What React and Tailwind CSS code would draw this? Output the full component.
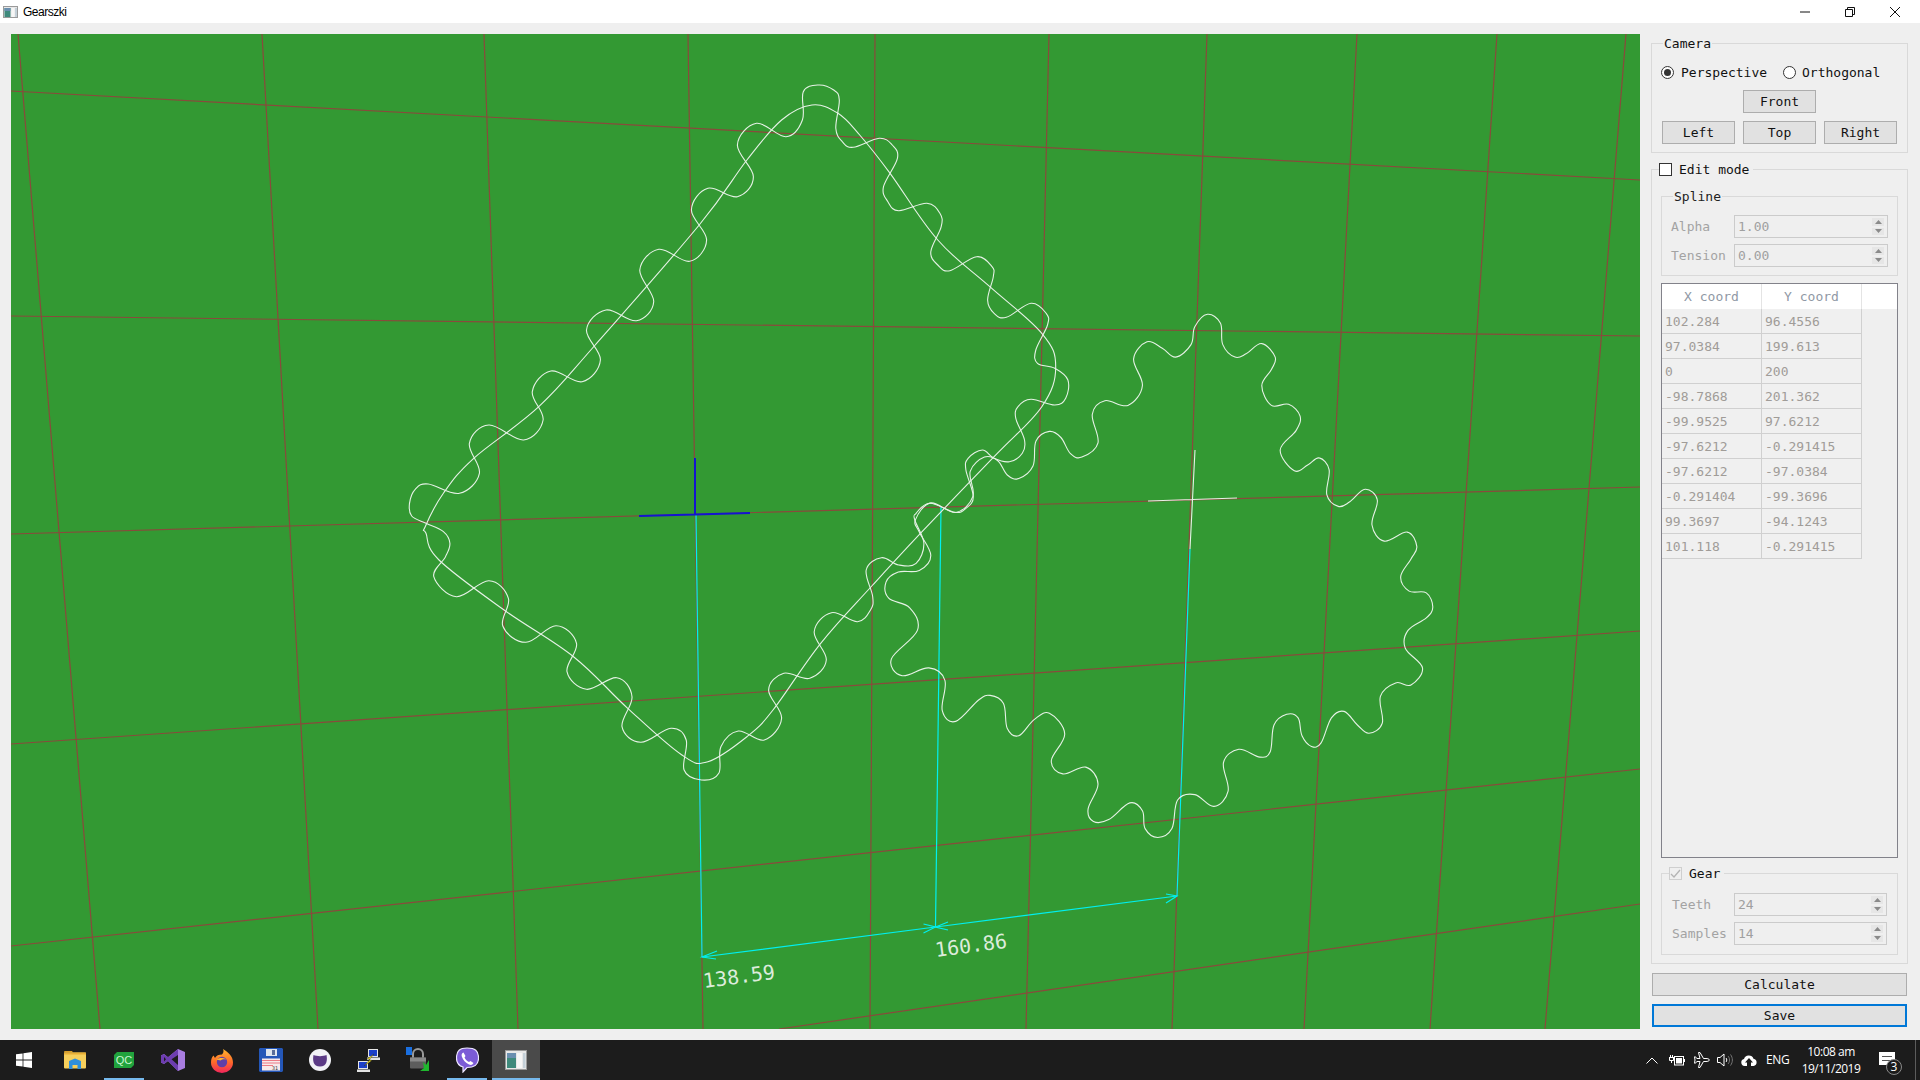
import React from "react";

const mono = { fontFamily: '"DejaVu Sans Mono", monospace' };

// traced from the reference, crop coords -> page coords
const fromA = (p) => [400 + (p[0] * 680) / 1568, 70 + p[1] / 3];
const fromB = (p) => [860 + (p[0] * 600) / 1568, 300 + (p[1] * 560) / 1568];

const gearOne = [
  [930,65],[965,45],[1000,60],[1013,90],[1005,175],[1020,215],[1045,232],[1105,205],[1135,225],[1147,265],[1115,350],[1125,395],[1150,422],[1215,400],[1245,430],[1248,470],[1224,545],[1240,585],[1268,602],[1330,560],[1365,590],[1368,620],[1355,690],[1370,730],[1398,742],[1455,700],[1490,730],[1493,765],[1466,840],[1470,880],[1510,895],[1540,930],[1535,985],[1510,1005],[1455,988],[1425,1010],[1420,1045],[1440,1110],[1435,1150],[1405,1175],[1370,1165],[1343,1140],[1310,1165],[1305,1200],[1322,1280],[1305,1315],[1280,1327],[1222,1300],[1190,1330],[1187,1350],
  [1208,1420],[1190,1480],[1150,1485],[1110,1463],[1075,1500],[1090,1580],[1085,1620],[1055,1655],[995,1628],[955,1685],[983,1770],[945,1825],[885,1810],[850,1860],[880,1945],[840,2010],[780,1983],[740,2030],[735,2110],[695,2130],[655,2100],[660,2010],[625,1975],[555,2017],[512,1970],[535,1880],[500,1823],[430,1858],[385,1805],[407,1720],[360,1667],[290,1717],[237,1668],[250,1585],[205,1532],[130,1580],[78,1520],[105,1460],[115,1420],[100,1385],[60,1360],[27,1338],
  [22,1300],[35,1258],[65,1242],[137,1270],[183,1210],[160,1120],[205,1065],[285,1110],[330,1050],[305,965],[348,903],[420,935],[462,870],[430,780],[475,720],[545,752],[585,695],[553,600],[597,538],[668,574],[707,510],[672,420],[710,355],[778,380],[815,320],[778,225],[822,160],[890,200],[928,150],
].map(fromA);

const splineOne = [
  [950,105],[1010,130],[1060,195],[1130,310],[1240,510],[1360,650],[1480,790],[1512,890],[1480,1010],[1370,1160],[1200,1390],[1090,1545],[970,1720],[860,1920],[800,2000],[710,2075],[650,2055],[525,1915],[400,1760],[240,1620],[90,1470],[60,1390],[58,1370],[100,1270],[170,1165],[320,1010],[450,825],[690,465],[800,270],[880,150],
].map(fromA);

const gearTwo = [
  [875,75],[908,40],[942,65],[948,125],[980,160],[1010,150],[1050,122],[1085,160],[1075,195],[1050,240],[1075,295],[1120,292],[1150,325],[1140,365],[1098,420],[1135,478],[1170,462],[1200,442],[1226,475],[1220,545],[1250,578],[1280,565],[1320,530],[1352,560],[1338,630],[1370,675],[1430,650],[1455,690],[1440,725],[1413,775],[1435,815],[1480,820],[1497,860],[1480,890],[1432,925],[1425,975],[1470,1030],[1440,1078],[1400,1072],[1360,1110],[1365,1185],[1330,1213],[1300,1190],[1265,1152],[1232,1170],[1205,1240],[1180,1250],[1155,1220],[1145,1170],[1115,1160],[1082,1190],[1072,1265],[1045,1280],[990,1258],[950,1295],[962,1375],[925,1418],[875,1385],[830,1400],[815,1480],[778,1505],[745,1480],[738,1430],[705,1408],[650,1455],[610,1460],[596,1425],[622,1355],[590,1308],[530,1327],[500,1290],[535,1215],[495,1157],[455,1175],[415,1220],[385,1200],[375,1130],[340,1107],[310,1120],[250,1180],[215,1150],[222,1065],[180,1030],[110,1052],[82,1005],[150,925],[130,862],[75,835],[68,790],[100,762],[155,757],[185,715],[155,650],[145,615],[185,568],[250,595],[295,550],[288,480],[325,440],[360,450],[385,490],[415,500],[452,465],[460,395],[495,368],[525,385],[550,430],[580,440],[622,400],[607,320],[640,282],[700,295],[738,240],[715,165],[750,117],[790,135],[825,160],[865,125],
].map(fromB);

// closed catmull-rom through the traced points
function smooth(pts) {
  const n = pts.length;
  let d = `M${pts[0][0].toFixed(1)} ${pts[0][1].toFixed(1)}`;
  for (let i = 0; i < n; i++) {
    const p0 = pts[(i - 1 + n) % n];
    const p1 = pts[i];
    const p2 = pts[(i + 1) % n];
    const p3 = pts[(i + 2) % n];
    const c1 = [p1[0] + (p2[0] - p0[0]) / 5.5, p1[1] + (p2[1] - p0[1]) / 5.5];
    const c2 = [p2[0] - (p3[0] - p1[0]) / 5.5, p2[1] - (p3[1] - p1[1]) / 5.5];
    d += `C${c1[0].toFixed(1)} ${c1[1].toFixed(1)} ${c2[0].toFixed(1)} ${c2[1].toFixed(1)} ${p2[0].toFixed(1)} ${p2[1].toFixed(1)}`;
  }
  return d + "Z";
}

const gridLines = [
  [11, 91, 1640, 180], [11, 316, 1640, 336], [11, 534, 1640, 487], [11, 744, 1640, 631], [11, 946, 1640, 769], [779, 1029, 1640, 904],
  [18, 34, 100, 1029], [262, 34, 318, 1029], [484, 34, 518, 1029], [688, 34, 703, 1029], [875, 34, 870, 1029],
  [1049, 34, 1026, 1029], [1207, 34, 1172, 1029], [1357, 34, 1304, 1029], [1497, 34, 1430, 1029], [1626, 34, 1545, 1029],
];

function Viewport() {
  return (
    <svg className="block w-full h-full" viewBox="11 34 1629 995">
      {gridLines.map((l, i) => (
        <line key={i} x1={l[0]} y1={l[1]} x2={l[2]} y2={l[3]} stroke="#8a4a3c" strokeWidth="1.2" />
      ))}

      <g stroke="#00f0f0" strokeWidth="1.2" fill="none">
        <path d="M696 515L702 957M941 507L935.5 927M1190 549L1177 896" />
        <path d="M702 957L935.5 927L1177 896" />
        <path d="M717 951L702 957L716 959" />
        <path d="M923.5 924L935.5 927L923.5 933M948 922L935.5 927L948 930" />
        <path d="M1166 894L1177 896L1166 903" />
      </g>

      <g stroke="#1414d0" strokeWidth="2" fill="none">
        <path d="M695 458L695 514M639 516L750 513" />
      </g>

      <g stroke="#e6f2e6" strokeWidth="1.1" fill="none">
        <path d={smooth(gearOne)} />
        <path d={smooth(splineOne)} />
        <path d={smooth(gearTwo)} />
        <path d="M1195 450L1190 549M1148 501L1237 498" />
      </g>

      <g fill="#dcecdc" fontSize="20" style={mono}>
        <text x="704" y="988" transform="rotate(-7.4 704 988)">138.59</text>
        <text x="936" y="957" transform="rotate(-7.4 936 957)">160.86</text>
      </g>
    </svg>
  );
}

function Group({ title, titleClass = "left-[11px]", className = "", children }) {
  return (
    <div className={`relative border border-[#d9d9d9] ${className}`}>
      {title && (
        <span className={`absolute -top-[8px] bg-[#efefef] px-[1px] leading-[16px] ${titleClass}`}>{title}</span>
      )}
      {children}
    </div>
  );
}

function Button({ label, className = "" }) {
  return (
    <div className={`flex items-center justify-center h-[23px] bg-[#e1e1e1] text-[#111] ${className}`}>
      {label}
    </div>
  );
}

function Radio({ checked }) {
  return (
    <span className="flex items-center justify-center w-[13px] h-[13px] rounded-full border border-[#333] bg-white">
      {checked && <span className="w-[7px] h-[7px] rounded-full bg-[#333]" />}
    </span>
  );
}

function Spin({ label, value, className = "" }) {
  return (
    <div className={`flex items-center ${className}`}>
      <span className="flex-1 text-[#a3a3a3]">{label}</span>
      <div className="flex items-center justify-between w-[154px] h-[23px] pl-[3px] pr-[2px] border border-[#cbcbcb] text-[#a0a0a0]">
        <span>{value}</span>
        <div className="flex flex-col w-[14px] h-[19px]">
          <span className="flex flex-1 items-center justify-center bg-[#e6e6e6] border border-[#efefef]">
            <svg width="7" height="4" viewBox="0 0 7 4"><path d="M3.5 0L7 4H0Z" fill="#8a8a8a" /></svg>
          </span>
          <span className="flex flex-1 items-center justify-center bg-[#e6e6e6] border border-[#efefef]">
            <svg width="7" height="4" viewBox="0 0 7 4"><path d="M3.5 4L7 0H0Z" fill="#8a8a8a" /></svg>
          </span>
        </div>
      </div>
    </div>
  );
}

const coords = [
  ["102.284", "96.4556"],
  ["97.0384", "199.613"],
  ["0", "200"],
  ["-98.7868", "201.362"],
  ["-99.9525", "97.6212"],
  ["-97.6212", "-0.291415"],
  ["-97.6212", "-97.0384"],
  ["-0.291404", "-99.3696"],
  ["99.3697", "-94.1243"],
  ["101.118", "-0.291415"],
];

function CoordTable() {
  return (
    <div className="h-[575px] mt-[7px] border border-[#82828a] text-[#a09c98]">
      <div className="flex h-[25px] bg-white text-[#8f98a5]">
        <div className="flex items-center justify-center w-[100px] border-r border-[#e4e4e4]">X coord</div>
        <div className="flex items-center justify-center w-[100px] border-r border-[#e4e4e4]">Y coord</div>
      </div>
      {coords.map((row) => (
        <div key={row[0] + row[1]} className="flex w-[200px] h-[25px]">
          <div className="flex items-center w-[100px] pl-[3px] bg-[#f0f0f0] border-r border-b border-[#d0d0d0]">{row[0]}</div>
          <div className="flex items-center w-[100px] pl-[3px] bg-[#f0f0f0] border-r border-b border-[#d0d0d0]">{row[1]}</div>
        </div>
      ))}
    </div>
  );
}

function SidePanel() {
  return (
    <div className="w-[280px] pt-[20px] pl-[11px] pr-[12px] text-[13px] leading-none" style={mono}>
      <Group title="Camera" className="h-[110px] px-[10px] text-[#111]">
        <div className="flex items-center h-[16px] mt-[20px] ml-[-1px]">
          <Radio checked />
          <span className="ml-[7px] w-[102px]">Perspective</span>
          <Radio />
          <span className="ml-[6px]">Orthogonal</span>
        </div>
        <div className="flex justify-center mt-[10px]">
          <Button label="Front" className="w-[73px] border border-[#adadad]" />
        </div>
        <div className="grid grid-cols-3 gap-[8px] w-[235px] mt-[8px]">
          <Button label="Left" className="border border-[#adadad]" />
          <Button label="Top" className="border border-[#adadad]" />
          <Button label="Right" className="border border-[#adadad]" />
        </div>
      </Group>

      <Group className="h-[795px] mt-[16px] px-[9px]">
        <div className="absolute -top-[7px] left-[7px] flex items-center gap-[7px] bg-[#efefef] pr-[4px] text-[#111]">
          <span className="w-[13px] h-[13px] border border-[#333] bg-white" />
          <span>Edit mode</span>
        </div>

        <Group title="Spline" className="h-[80px] mt-[26px] px-[9px] text-[#222]">
          <Spin label="Alpha" value="1.00" className="mt-[18px]" />
          <Spin label="Tension" value="0.00" className="mt-[6px]" />
        </Group>

        <CoordTable />

        <Group className="h-[82px] mt-[15px] pl-[10px] pr-[10px]">
          <div className="absolute -top-[7px] left-[7px] flex items-center gap-[7px] bg-[#efefef] pr-[4px] text-[#111]">
            <span className="flex items-center justify-center w-[13px] h-[13px] border border-[#cfcfcf]">
              <svg width="11" height="9" viewBox="0 0 11 9" fill="none"><path d="M1 5L4 8L10 1" stroke="#b4b4b4" strokeWidth="1.3" /></svg>
            </span>
            <span>Gear</span>
          </div>
          <Spin label="Teeth" value="24" className="mt-[19px] [&>div]:w-[153px]" />
          <Spin label="Samples" value="14" className="mt-[6px] [&>div]:w-[153px]" />
        </Group>
      </Group>

      <Button label="Calculate" className="w-[255px] mt-[9px] ml-[1px] border border-[#adadad]" />
      <Button label="Save" className="w-[255px] mt-[8px] ml-[1px] border-2 border-[#0078d7]" />
    </div>
  );
}

function AppIcon() {
  return (
    <svg width="15" height="12" viewBox="0 0 15 12">
      <rect x="0.5" y="0.5" width="14" height="11" fill="#e8e8e8" stroke="#9a9a9a" />
      <rect x="1.5" y="2" width="6" height="9" fill="#3f8a7c" />
      <rect x="1.5" y="2" width="6" height="3" fill="#6a8fb0" />
      <rect x="8.5" y="2" width="3" height="9" fill="#f6f6f6" />
      <rect x="12" y="2" width="2" height="9" fill="#c4d0d8" />
    </svg>
  );
}

function TitleBar() {
  return (
    <div className="flex items-center h-[23px] bg-white text-black">
      <div className="ml-[3px]"><AppIcon /></div>
      <span className="ml-[5px] text-[12px] tracking-[-0.5px]" style={{ fontFamily: '"Liberation Sans", sans-serif' }}>Gearszki</span>
      <div className="flex ml-auto pr-[3px]">
        <div className="flex items-center justify-center w-[45px] h-[21px]">
          <svg width="10" height="10" viewBox="0 0 10 10"><path d="M0 5H10" stroke="#111" /></svg>
        </div>
        <div className="flex items-center justify-center w-[45px] h-[21px]">
          <svg width="10" height="10" viewBox="0 0 10 10" fill="none" stroke="#111"><path d="M.5 2.5h7v7h-7zM2.5 2.5v-2h7v7h-2" /></svg>
        </div>
        <div className="flex items-center justify-center w-[45px] h-[21px]">
          <svg width="10" height="10" viewBox="0 0 10 10"><path d="M0 0L10 10M10 0L0 10" stroke="#111" /></svg>
        </div>
      </div>
    </div>
  );
}

const icons = {
  start: (
    <svg width="16" height="16" viewBox="0 0 16 16" fill="#fff">
      <path d="M0 2.3L6.6 1.4V7.6H0ZM7.4 1.3L16 0V7.6H7.4ZM0 8.4H6.6V14.6L0 13.7ZM7.4 8.4H16V16L7.4 14.7Z" />
    </svg>
  ),
  explorer: (
    <svg width="22" height="20" viewBox="0 0 22 20">
      <path d="M0 2a1 1 0 0 1 1-1h7l1 1.5H0Z" fill="#d99d29" />
      <rect x="0" y="2.5" width="22" height="16" rx="1" fill="#f6cf5c" />
      <rect x="0" y="2.5" width="22" height="2" fill="#e8ae34" />
      <path d="M5 19v-8l6-2.5 6 2.5v8h-3.5v-4h-5v4Z" fill="#2f8fdc" />
    </svg>
  ),
  qc: (
    <svg width="20" height="16" viewBox="0 0 20 16">
      <path d="M3 0H20V13L17 16H0V3Z" fill="#21a33d" />
      <text x="10" y="12" textAnchor="middle" fontSize="11" fill="#c9f5d0" style={{ fontFamily: '"Liberation Sans", sans-serif' }}>QC</text>
    </svg>
  ),
  vs: (
    <svg width="24" height="24" viewBox="0 0 24 24">
      <path d="M17 1L24 4V20L17 23L7 13L3 16L0 14.5V7.5L3 6L7 9.2Z" fill="#a87de0" />
      <path d="M17 1V23L7 13L3 16L0 14.5V7.5L3 6L7 9.2Z" fill="#6d3db0" />
      <path d="M17 7L10.5 11.2L17 17ZM3 9V13.5L5 11.2Z" fill="#1c1c1c" />
    </svg>
  ),
  firefox: (
    <svg width="24" height="25" viewBox="0 0 24 25">
      <defs>
        <linearGradient id="ff" x1="0" y1="0" x2="0" y2="1">
          <stop offset="0" stopColor="#ffb52e" />
          <stop offset="0.55" stopColor="#ff6a2a" />
          <stop offset="1" stopColor="#f0245c" />
        </linearGradient>
      </defs>
      <path d="M13 1C18 4 23 8 23 14.5A11 10.5 0 0 1 1 14.5C1 11 2 9 3.5 7.5L5 10C6 7.5 9 6.5 12 6.5C13.5 5 14 3 13 1Z" fill="url(#ff)" />
      <circle cx="12" cy="14" r="5.2" fill="#5f3fa8" />
      <path d="M6.5 11.5C9 9.5 14 9.5 16.5 11.5C14 10.8 12 11.2 10.5 12.5Z" fill="#ffb52e" />
    </svg>
  ),
  floppy: (
    <svg width="24" height="24" viewBox="0 0 24 24">
      <path d="M1 0H23L24 1V23L23 24H1L0 23V1Z" fill="#2457b8" />
      <rect x="7" y="1" width="11" height="7" fill="#dfe6ee" />
      <rect x="13" y="2" width="3" height="5" fill="#5a6e9a" />
      <rect x="3" y="10.5" width="18" height="12" fill="#f7e9ea" />
      <path d="M3 12.5H21M3 15H21M3 17.5H14" stroke="#ec7a86" strokeWidth="1.1" />
      <text x="19" y="22" textAnchor="end" fontSize="5" fill="#333" style={mono}>31</text>
    </svg>
  ),
  cat: (
    <svg width="22" height="24" viewBox="0 0 22 24">
      <circle cx="11" cy="12" r="11" fill="#f1f1f6" />
      <path d="M4.5 7C8 8.5 14 8.5 17.5 7C18.5 12 18 18.5 11 18.5C4 18.5 3.5 12 4.5 7Z" fill="#5b3a86" />
    </svg>
  ),
  putty: (
    <svg width="24" height="25" viewBox="0 0 24 25">
      <rect x="11" y="1" width="10" height="8" fill="#e6e6e6" />
      <rect x="12" y="2" width="8" height="6" fill="#1c3fc8" />
      <path d="M10 9.5H23V12H10Z" fill="#e2e2e2" />
      <rect x="1" y="13" width="10" height="8" fill="#e6e6e6" />
      <rect x="2" y="14" width="8" height="6" fill="#1c3fc8" />
      <path d="M0 21.5H13V24H0Z" fill="#e2e2e2" />
      <path d="M17 6L10 11L13 11.5L7 18L15 12.5L12 12Z" fill="#f6e31c" stroke="#222" strokeWidth=".4" />
    </svg>
  ),
  lock: (
    <svg width="24" height="26" viewBox="0 0 24 26">
      <path d="M7 11V7a5 5 0 0 1 10 0V11" fill="none" stroke="#9a9a9a" strokeWidth="2" />
      <rect x="4" y="10.5" width="16" height="11" rx="1" fill="#5d5d5d" />
      <rect x="4" y="10.5" width="16" height="4" fill="#8a8a8a" />
      <rect x="0" y="0" width="6" height="8" fill="#1a6fe0" />
      <path d="M17 15L20 18L23 13V24H14L18 21Z" fill="#1fb82e" />
    </svg>
  ),
  viber: (
    <svg width="23" height="26" viewBox="0 0 23 26">
      <path d="M11 1C19 1 22.5 3.5 22.5 11C22.5 18 18 20.5 11 20.5L7 25V20C2 18.5 0.5 16 0.5 11C0.5 3.5 4 1 11 1Z" fill="#7b5bd6" stroke="#eee8ff" strokeWidth="1.2" />
      <path d="M7.5 5.5L9.5 9L8.5 10.5C9.5 12.5 11 14 13 15L14.5 14L17.5 16C16.5 18 15 18.5 13 17.5C9.5 16 7 13 5.8 9.5C5.2 7.5 6 6 7.5 5.5Z" fill="#fff" />
    </svg>
  ),
  gearszki: (
    <svg width="22" height="20" viewBox="0 0 22 20">
      <rect x="0.5" y="0.5" width="21" height="19" fill="#e8e8e8" stroke="#9a9a9a" />
      <rect x="2" y="3" width="9" height="15" fill="#3f8a7c" />
      <rect x="2" y="3" width="9" height="5" fill="#6a8fb0" />
      <rect x="12" y="3" width="5" height="15" fill="#f6f6f6" />
      <rect x="18" y="3" width="2.5" height="15" fill="#c4d0d8" />
    </svg>
  ),
};

function TaskButton({ icon, open, active }) {
  return (
    <div className={`relative flex items-center justify-center w-[48px] h-[40px] ${active ? "bg-[#4a4a4a]" : ""}`}>
      {icons[icon]}
      {open && (
        <span className={`absolute bottom-0 h-[2px] bg-[#76b9ed] ${active ? "w-[48px]" : "w-[40px]"}`} />
      )}
    </div>
  );
}

function Tray() {
  return (
    <div className="flex items-center h-[40px] ml-auto text-white" style={{ fontFamily: '"Open Sans", sans-serif' }}>
      <svg width="12" height="7" viewBox="0 0 12 7" fill="none" className="mr-[11px]"><path d="M.5 6.5L6 1l5.5 5.5" stroke="#fff" /></svg>
      <svg width="16" height="11" viewBox="0 0 16 11" fill="none" className="mr-[9px]">
        <path d="M0 2.5H5M1.5 0V2.5M3.5 0V2.5M2.5 6V8" stroke="#fff" />
        <path d="M.5 2.5V5.5H4.5V2.5" stroke="#fff" />
        <rect x="5.5" y="1.5" width="9" height="8.5" stroke="#fff" />
        <rect x="7" y="3" width="6" height="5.5" fill="#fff" />
        <rect x="15" y="4" width="1" height="3" fill="#fff" />
      </svg>
      <svg width="16" height="16" viewBox="0 0 16 16" fill="none" className="mr-[7px]">
        <path d="M15.5 8C15 6.8 13.5 6.5 12 6.5H9.5L6 .5H4.5L6 6.5H2.8L1.5 4.8H.5L1 8L.5 11.2H1.5L2.8 9.5H6L4.5 15.5H6L9.5 9.5H12C13.5 9.5 15 9.2 15.5 8Z" stroke="#fff" />
      </svg>
      <svg width="16" height="16" viewBox="0 0 16 16" fill="none" className="mr-[8px]">
        <path d="M.5 5.5H3L7 2V14L3 10.5H.5Z" stroke="#fff" />
        <path d="M9 6C10 7 10 9 9 10" stroke="#fff" />
        <path d="M11 4C13 6 13 10 11 12M13.5 2.5C16 6 16 10 13.5 13.5" stroke="#777" />
      </svg>
      <svg width="16" height="11" viewBox="0 0 16 11" className="mr-[9px]">
        <path d="M3.5 11A3.5 3.5 0 0 1 3 4.1 5 5 0 0 1 12.5 3.7 3.7 3.7 0 0 1 12.5 11H10V7.5H12L8 3L4 7.5H6V11Z" fill="#fff" />
      </svg>
      <span className="w-[23px] text-[12px] tracking-[-0.3px] leading-none">ENG</span>
      <div className="flex flex-col items-center w-[64px] ml-[10px] text-[12px] tracking-[-0.5px] leading-[17px]">
        <span>10:08 am</span>
        <span>19/11/2019</span>
      </div>
      <div className="relative w-[16px] h-[13px] ml-[16px] mt-[-3px] bg-white">
        <span className="absolute left-[3px] top-[4px] w-[10px] h-[5px] border-y border-[#555]" />
        <span className="absolute left-[7px] top-[7px] flex items-center justify-center w-[16px] h-[16px] rounded-full bg-[#1c1c1c] border border-[#8a8a8a] text-[12px] leading-none">3</span>
      </div>
      <span className="w-px h-[40px] ml-[20px] mr-[4px] bg-[#5c5c5c]" />
    </div>
  );
}

function Taskbar() {
  return (
    <div className="flex items-center h-[40px] bg-[#1c1c1c]">
      <TaskButton icon="start" />
      <div className="flex gap-px ml-[3px]">
        <TaskButton icon="explorer" />
        <TaskButton icon="qc" open />
        <TaskButton icon="vs" />
        <TaskButton icon="firefox" />
        <TaskButton icon="floppy" />
        <TaskButton icon="cat" />
        <TaskButton icon="putty" />
        <TaskButton icon="lock" />
        <TaskButton icon="viber" open />
        <TaskButton icon="gearszki" open active />
      </div>
      <Tray />
    </div>
  );
}

export default function App() {
  return (
    <div className="flex flex-col w-[1920px] h-[1080px] overflow-hidden bg-[#efefef]">
      <TitleBar />
      <div className="flex flex-1 min-h-0">
        <div className="flex-1 min-w-0 pt-[11px] pb-[11px] pl-[11px]">
          <div className="w-full h-full bg-[#339933]">
            <Viewport />
          </div>
        </div>
        <SidePanel />
      </div>
      <Taskbar />
    </div>
  );
}
